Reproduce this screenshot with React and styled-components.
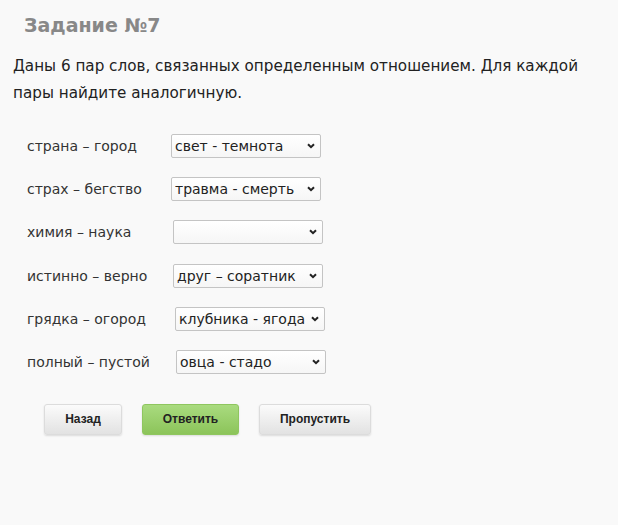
import React from "react";
import styled, { createGlobalStyle } from "styled-components";

const GlobalStyle = createGlobalStyle`
  html, body {
    margin: 0;
    padding: 0;
    background: #f9f9f9;
  }
  body {
    font-family: "DejaVu Sans", Verdana, sans-serif;
    color: #222;
  }
`;

const Page = styled.div`
  width: 618px;
  height: 525px;
  padding: 13px 0 0 13px;
  box-sizing: border-box;
`;

const Title = styled.h2`
  margin: 0 0 0 11px;
  font-size: 19px;
  font-weight: bold;
  color: #888;
  line-height: 24px;
`;

const Text = styled.p`
  margin: 16px 0 0 0;
  width: 590px;
  font-size: 15.2px;
  line-height: 27px;
  color: #222;
`;

const Pairs = styled.div`
  margin: 27px 0 0 14px;
  display: flex;
  flex-direction: column;
  gap: 19.2px;
`;

const Row = styled.div`
  display: flex;
  align-items: center;
  height: 24px;
`;

const Label = styled.span`
  width: ${({ $w }) => $w}px;
  font-size: 14px;
  color: #333;
  white-space: nowrap;
`;

const SelectWrap = styled.div`
  position: relative;
  width: 150px;
  height: 24px;
`;

const Select = styled.select`
  appearance: none;
  width: 100%;
  height: 100%;
  box-sizing: border-box;
  border: 1px solid #c4c4c4;
  border-radius: 2px;
  background: linear-gradient(#ffffff, #f6f6f6);
  font-family: "DejaVu Sans", Verdana, sans-serif;
  font-size: 14px;
  color: #222;
  padding: 0 18px 0 3px;
  outline: none;
`;

const Chevron = styled.svg`
  position: absolute;
  right: 6px;
  top: 9px;
  width: 8px;
  height: 6px;
  pointer-events: none;
`;

const Buttons = styled.div`
  margin: 30px 0 0 31px;
  display: flex;
  gap: 20px;
`;

const Button = styled.button`
  width: ${({ $w }) => $w}px;
  height: 31px;
  border-radius: 3px;
  font-family: "Liberation Sans", Arial, sans-serif;
  font-weight: bold;
  font-size: 12px;
  color: #222;
  cursor: pointer;
  border: 1px solid ${({ $green }) => ($green ? "#8fc65f" : "#dcdcdc")};
  background: ${({ $green }) =>
    $green
      ? "linear-gradient(#a9db7f, #8cc45a)"
      : "linear-gradient(#fbfbfb, #e2e2e2)"};
  box-shadow: 0 1px 2px rgba(0, 0, 0, 0.12);
`;

const pairs = [
  { label: "страна – город", value: "свет - темнота", w: 144 },
  { label: "страх – бегство", value: "травма - смерть", w: 144 },
  { label: "химия – наука", value: "", w: 146 },
  { label: "истинно – верно", value: "друг – соратник", w: 146 },
  { label: "грядка – огород", value: "клубника - ягода", w: 148 },
  { label: "полный – пустой", value: "овца - стадо", w: 149 },
];

const App = () => {
  return (
    <Page>
      <GlobalStyle />
      <Title>Задание №7</Title>
      <Text>
        Даны 6 пар слов, связанных определенным отношением. Для каждой пары
        найдите аналогичную.
      </Text>
      <Pairs>
        {pairs.map((p) => (
          <Row key={p.label}>
            <Label $w={p.w}>{p.label}</Label>
            <SelectWrap>
              <Select defaultValue={p.value}>
                <option value="">{""}</option>
                {p.value && <option value={p.value}>{p.value}</option>}
              </Select>
              <Chevron viewBox="0 0 8 6">
                <path
                  d="M1 1.2 L4 4.2 L7 1.2"
                  fill="none"
                  stroke="#222"
                  strokeWidth="2"
                />
              </Chevron>
            </SelectWrap>
          </Row>
        ))}
      </Pairs>
      <Buttons>
        <Button $w={78}>Назад</Button>
        <Button $w={97} $green>
          Ответить
        </Button>
        <Button $w={112}>Пропустить</Button>
      </Buttons>
    </Page>
  );
};

export default App;
